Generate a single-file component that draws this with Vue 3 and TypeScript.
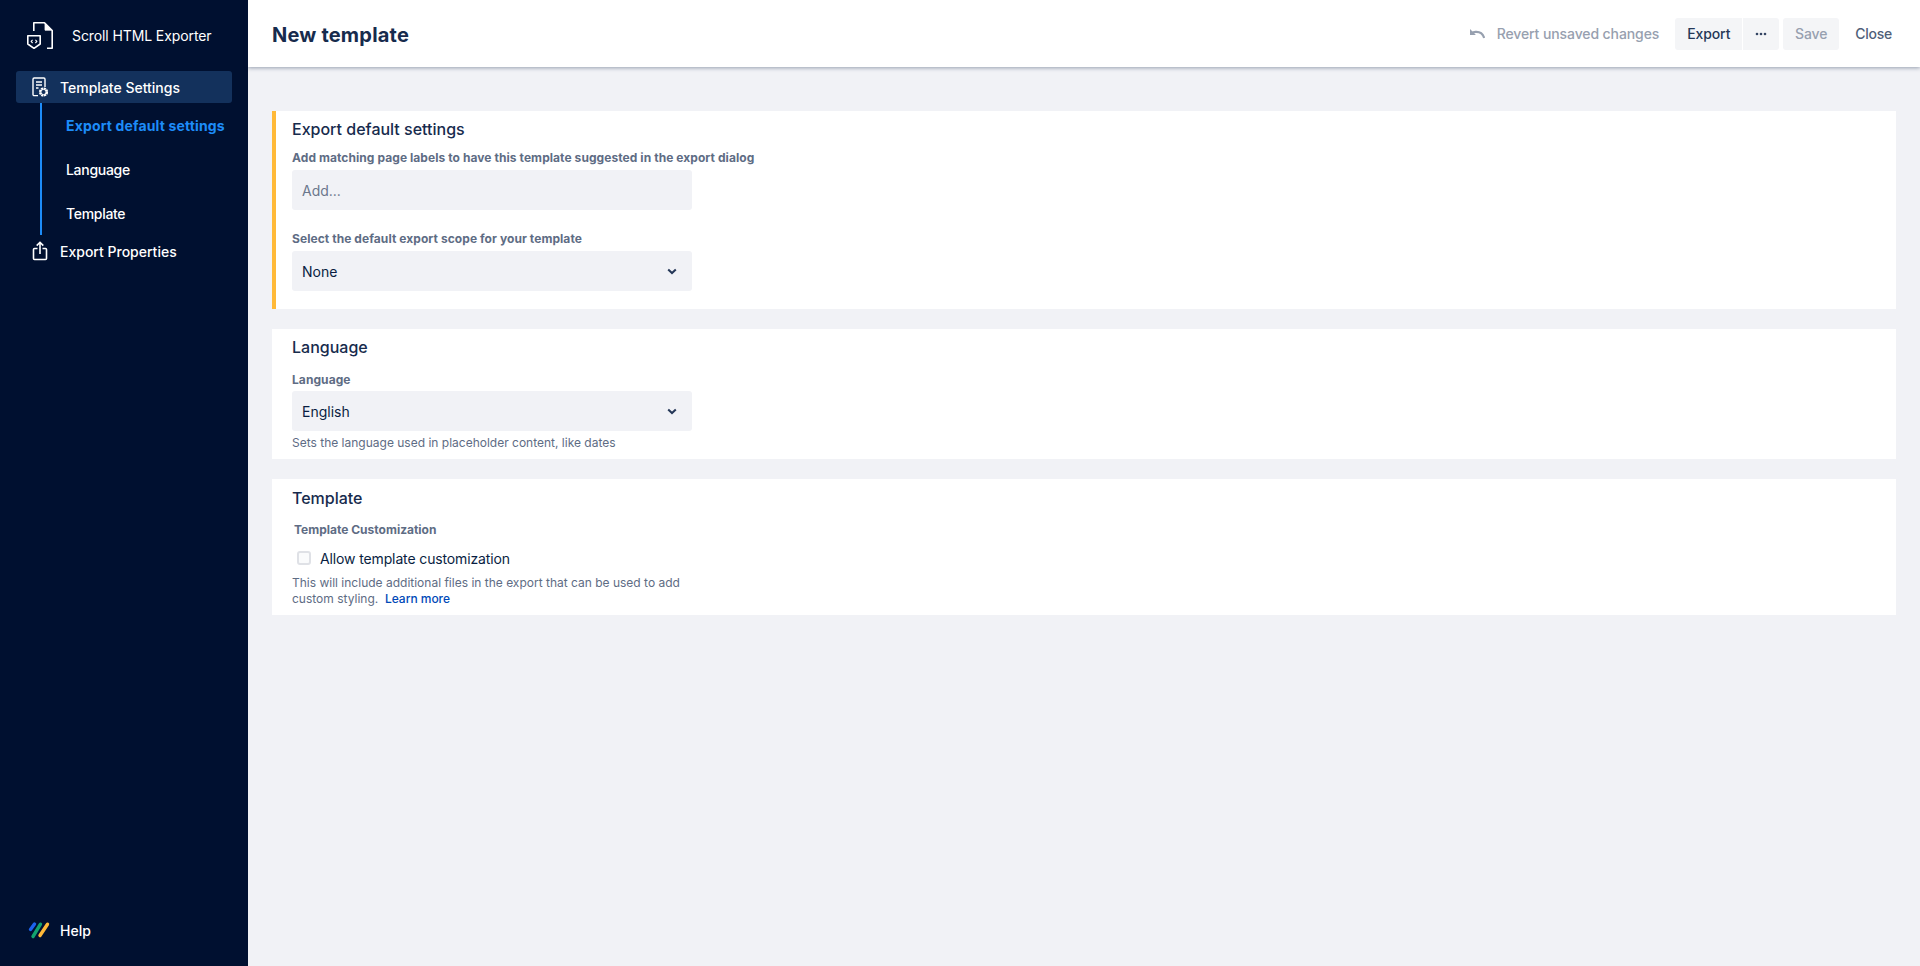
<script setup lang="ts">
const subItems: { label: string; active?: boolean }[] = [
  { label: 'Export default settings', active: true },
  { label: 'Language' },
  { label: 'Template' },
]
</script>

<template>
  <div class="app">
    <aside class="sidebar">
      <div class="brand">
        <svg class="brand-icon" width="28" height="28" viewBox="0 0 28 28" fill="none" stroke="#fff" stroke-width="1.6" stroke-linejoin="round">
          <path d="M7.8 10V1.8H18.5L26.2 9.500V27.200H21" />
          <path d="M19 2.500V9.200H25.600L19 2.500Z" fill="#fff" stroke-width="0.8" />
          <path d="M1.800 14.800H14.200V23L8 27.300 1.800 23Z" />
          <path d="M6.600 18.800l-1.500 1.600 1.500 1.600M9.400 18.800l1.500 1.600-1.500 1.600" stroke-width="1.100" />
        </svg>
        <span class="brand-name">Scroll HTML Exporter</span>
      </div>
      <nav class="nav">
        <div class="nav-item nav-item-active">
          <svg width="16" height="20" viewBox="0 0 16 20" fill="none" stroke="#fff" stroke-width="1.4">
            <path d="M6 18.600H2.200a1.200 1.200 0 0 1-1.200-1.200V2.200A1.200 1.200 0 0 1 2.200 1h9.600A1.200 1.200 0 0 1 13 2.200V10" />
            <path d="M4 5h6M4 8h6M4 11h2.500" />
            <circle cx="11.500" cy="15" r="3.600" stroke-width="2" stroke-dasharray="2.200 .6" />
            <circle cx="11.500" cy="15" r="2.600" stroke-width="1" />
          </svg>
          <span>Template Settings</span>
        </div>
        <ul class="sub">
          <li v-for="item in subItems" :key="item.label" class="sub-item" :class="{ 'sub-active': item.active }">{{ item.label }}</li>
        </ul>
        <div class="nav-item">
          <svg width="16" height="20" viewBox="0 0 16 20" fill="none" stroke="#fff" stroke-width="1.6">
            <path d="M5.500 7.500H2.500a1 1 0 0 0-1 1v9a1 1 0 0 0 1 1h11a1 1 0 0 0 1-1v-9a1 1 0 0 0-1-1H10.500" />
            <path d="M8 13V1.500M4.700 4.600 8 1.300l3.300 3.300" />
          </svg>
          <span>Export Properties</span>
        </div>
      </nav>
      <div class="help">
        <svg width="22" height="18" viewBox="0 0 22 18" fill="none" stroke-width="3.400" stroke-linecap="round">
          <path d="M2.500 8.500 6.500 3" stroke="#1d63ed" />
          <path d="M5 15.500 12.500 3.200" stroke="#12a36f" />
          <path d="M12 14.500 19.500 3.200" stroke="#ffb938" />
        </svg>
        <span>Help</span>
      </div>
    </aside>

    <div class="main">
      <header class="header">
        <h1 class="title">New template</h1>
        <div class="actions">
          <div class="revert">
            <svg width="16" height="12" viewBox="0 0 16 12" fill="none" stroke="#97a0af" stroke-width="2.200">
              <path d="M15.200 10C14 6 10.500 3.600 6.500 3.900 5 4 3.600 4.500 2.200 5.400" />
              <path d="M1 1 1 6.900 6.900 6.900Z" fill="#97a0af" stroke="none" />
            </svg>
            <span>Revert unsaved changes</span>
          </div>
          <div class="group">
            <button class="btn btn-left">Export</button>
            <button class="btn btn-right" aria-label="More">
              <svg width="12" height="4" viewBox="0 0 12 4" fill="#344563"><circle cx="2" cy="2" r="1.300" /><circle cx="6" cy="2" r="1.300" /><circle cx="10" cy="2" r="1.300" /></svg>
            </button>
          </div>
          <button class="btn btn-save">Save</button>
          <button class="btn-close">Close</button>
        </div>
      </header>

      <main class="content">
        <section class="card card-warn">
          <h2 class="card-title">Export default settings</h2>
          <div class="label label-1">Add matching page labels to have this template suggested in the export dialog</div>
          <div class="field placeholder">Add...</div>
          <div class="label label-2">Select the default export scope for your template</div>
          <div class="field">
            <span>None</span>
            <svg width="10" height="7" viewBox="0 0 10 7" fill="none" stroke="#253858" stroke-width="2"><path d="M1.200 1.400 5 5l3.800-3.600" /></svg>
          </div>
        </section>

        <section class="card card-lang">
          <h2 class="card-title">Language</h2>
          <div class="label label-3">Language</div>
          <div class="field">
            <span>English</span>
            <svg width="10" height="7" viewBox="0 0 10 7" fill="none" stroke="#253858" stroke-width="2"><path d="M1.200 1.400 5 5l3.800-3.600" /></svg>
          </div>
          <p class="hint hint-lang">Sets the language used in placeholder content, like dates</p>
        </section>

        <section class="card card-tpl">
          <h2 class="card-title card-title-tpl">Template</h2>
          <div class="label label-4">Template Customization</div>
          <label class="check">
            <span class="box"></span>
            <span>Allow template customization</span>
          </label>
          <p class="hint hint-tpl">This will include additional files in the export that can be used to add custom styling.&nbsp; <a class="link">Learn more</a></p>
        </section>
      </main>
    </div>
  </div>
</template>

<style scoped>
.app {
  display: flex;
  height: 966px;
  overflow: hidden;
  font-family: Inter, "Liberation Sans", sans-serif;
  background: #f1f2f6;
  color: #091e42;
}
.sidebar {
  width: 248px;
  flex: none;
  display: flex;
  flex-direction: column;
  background: #001030;
  color: #fff;
  box-sizing: border-box;
  padding: 0 16px;
}
.brand {
  display: flex;
  align-items: center;
  height: 71px;
  padding-left: 10px;
  box-sizing: border-box;
  gap: 18px;
  font-size: 14px;
  letter-spacing: -0.1px;
}
.brand-icon { flex: none; margin-bottom: 1px; }
.nav { display: flex; flex-direction: column; flex: 1; }
.nav-item {
  display: flex;
  align-items: center;
  gap: 12px;
  height: 32px;
  padding-left: 16px;
  border-radius: 3px;
  font-size: 14px;
  font-weight: 500;
}
.nav-item-active { background: #13315c; }
.sub {
  list-style: none;
  margin: 0 0 0 24px;
  padding: 1px 0 0 24px;
  border-left: 2px solid #1d8cf8;
  height: 132px;
  box-sizing: border-box;
}
.sub-item {
  height: 44px;
  line-height: 44px;
  font-size: 14px;
  font-weight: 500;
  letter-spacing: -0.3px;
  white-space: nowrap;
}
.sub-active { color: #1d8cf8; font-weight: 700; letter-spacing: 0.15px; }
.help {
  display: flex;
  align-items: center;
  gap: 10px;
  height: 20px;
  margin: 0 0 26px 12px;
  font-size: 14px;
  font-weight: 500;
}
.main { flex: 1; min-width: 0; display: flex; flex-direction: column; }
.header {
  height: 67px;
  flex: none;
  background: #fff;
  display: flex;
  align-items: center;
  justify-content: space-between;
  padding: 0 28px 0 24px;
  box-shadow: 0 1px 4px rgba(9, 30, 66, 0.4);
  z-index: 1;
}
.title { margin: 2px 0 0; font-size: 20px; font-weight: 700; letter-spacing: 0.2px; color: #172b4d; }
.actions { display: flex; align-items: center; font-size: 14px; font-weight: 500; letter-spacing: -0.1px; }
.revert {
  display: flex;
  align-items: center;
  gap: 12px;
  color: #97a0af;
  margin-right: 16px;
}
.group { display: flex; gap: 1px; margin-right: 4px; }
.btn {
  height: 32px;
  border: 0;
  background: #f4f5f7;
  color: #253858;
  font: inherit;
  letter-spacing: inherit;
  padding: 0;
  display: flex;
  align-items: center;
  justify-content: center;
  border-radius: 3px;
}
.btn-left { border-radius: 3px 0 0 3px; width: 67px; }
.btn-right { border-radius: 0 3px 3px 0; width: 36px; }
.btn-save { color: #97a0af; width: 56px; }
.btn-close {
  border: 0;
  background: none;
  font: inherit;
  letter-spacing: -0.25px;
  color: #505f79;
  padding: 0 0 0 16px;
}
.content {
  padding: 44px 24px 0;
  display: flex;
  flex-direction: column;
  gap: 20px;
}
.card {
  background: #fff;
  box-sizing: border-box;
  padding: 0 20px;
}
.card-warn { border-left: 4px solid #ffb938; padding-left: 16px; height: 198px; }
.card-lang { height: 130px; }
.card-tpl { height: 136px; }
.card-title {
  margin: 0;
  padding-top: 8px;
  font-size: 16px;
  line-height: 20px;
  font-weight: 500;
  color: #172b4d;
}
.card-title-tpl { padding-top: 9px; }
.label {
  font-size: 12px;
  line-height: 16px;
  font-weight: 700;
  letter-spacing: 0.07px;
  color: #5e6c84;
}
.label-1 { margin-top: 11px; margin-bottom: 4px; }
.label-2 { margin-top: 21px; margin-bottom: 4px; }
.label-3 { margin-top: 15px; margin-bottom: 3px; }
.label-4 { margin-top: 14px; margin-left: 2px; letter-spacing: 0; }
.field {
  width: 400px;
  height: 40px;
  box-sizing: border-box;
  background: #f1f2f6;
  border-radius: 3px;
  display: flex;
  align-items: center;
  justify-content: space-between;
  padding: 0 15px 0 10px;
  font-size: 14px;
  color: #091e42;
}
.placeholder { color: #6b778c; }
.hint {
  margin: 0;
  width: 400px;
  font-size: 12px;
  line-height: 16px;
  color: #5e6c84;
}
.hint-lang { margin-top: 4px; }
.check {
  display: flex;
  align-items: center;
  gap: 9px;
  margin: 10px 0 0 5px;
  height: 20px;
  font-size: 14px;
  letter-spacing: -0.13px;
  color: #091e42;
}
.box {
  width: 10px;
  height: 10px;
  border: 2px solid #dfe1e6;
  border-radius: 3px;
  background: #fafbfc;
  flex: none;
}
.hint-tpl { margin-top: 7px; }
.link { color: #0049b8; font-weight: 500; letter-spacing: -0.03px; }
</style>

<style>
body { margin: 0; }
</style>
